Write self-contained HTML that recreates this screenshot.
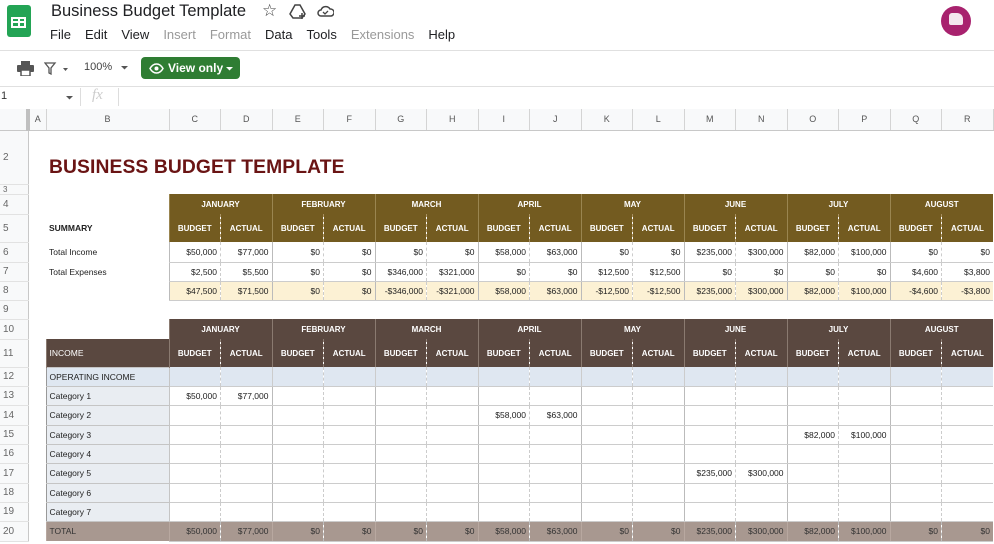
<!DOCTYPE html>
<html><head><meta charset="utf-8"><style>
*{box-sizing:border-box;margin:0;padding:0}
body{width:994px;height:544px;overflow:hidden;background:#fff;font-family:"Liberation Sans",Arial,sans-serif;position:relative}
.abs{position:absolute}
.menu span{margin-right:14px}
table{position:absolute;left:0;top:109px;border-collapse:collapse;table-layout:fixed;width:993px}
td{font-size:8.5px;color:#222;white-space:nowrap;overflow:hidden;padding:0 3px;border:none}
td.rh{background:#f8f9fa;color:#666;font-size:10px;text-align:left;padding-left:3px;border-right:1px solid #c8c8c8;border-bottom:1px solid #e2e2e2}
tr.ch td{background:#f8f9fa;color:#555;font-size:9px;text-align:center;border-right:1px solid #d4d4d4;border-bottom:1px solid #c8c8c8}
.h1 td.m{background:#735b20;color:#fff;font-weight:bold;text-align:center;border-left:1px solid #9a8550;font-size:8px}
.h1 td.m.d{border-left:1px dashed #a89060}
.h2 td.m{background:#5a4840;color:#fff;font-weight:bold;text-align:center;border-left:1px solid #8a7a70;font-size:8px}
.h2 td.m.d{border-left:1px dashed #8a7a70}
td.n{text-align:right;border-left:1px solid #bbb;border-bottom:1px solid #ccc}
td.n.d{border-left:1px dashed #ccc}
tr.net td.n{background:#fcf1d4}
td.lb{background:#e9edf2;border:1px solid #c5c5c5;border-left:1px solid #999}
tr.op td.c{background:#dfe7f1}
td.c{border-left:1px solid #ccc;border-bottom:1px solid #ccc}
td.c.d{border-left:1px dashed #ccc}
tr.tot td.t{background:#a89890;color:#333;border-left:1px solid #b8a8a0}
tr.tot td.t.d{border-left:1px dashed #bbb}
</style></head><body>
<div class="abs" style="left:7px;top:5px;width:24px;height:32px;background:#23a455;border-radius:3px"></div>
<div class="abs" style="left:11px;top:17px;width:15px;height:11px;border:2px solid #fff;background:#23a455"></div>
<div class="abs" style="left:11px;top:21px;width:15px;height:2px;background:#fff"></div>
<div class="abs" style="left:17.5px;top:17px;width:2px;height:11px;background:#fff"></div>
<div class="abs" style="left:51px;top:2px;font-size:16.5px;color:#202124">Business Budget Template</div>
<div class="abs" style="left:262px;top:1px;font-size:17px;color:#444">☆</div>
<svg class="abs" style="left:289px;top:3px" width="18" height="17" viewBox="0 0 18 17"><path d="M6 2h5l5 9-3 4H4l-3-4z" fill="none" stroke="#444" stroke-width="1.5"/><path d="M13 10v6M10 13h6" stroke="#444" stroke-width="1.5"/></svg>
<svg class="abs" style="left:317px;top:5px" width="17" height="12" viewBox="0 0 17 12"><path d="M4 11a3 3 0 010-6 5 5 0 019-1 3.5 3.5 0 011 7z" fill="none" stroke="#444" stroke-width="1.5"/><path d="M6 7l2 2 3-3" fill="none" stroke="#444" stroke-width="1.3"/></svg>
<div class="abs menu" style="left:50px;top:27px;font-size:13px;color:#202124;white-space:nowrap"><span>File</span><span>Edit</span><span>View</span><span style="color:#999">Insert</span><span style="color:#999">Format</span><span>Data</span><span>Tools</span><span style="color:#999">Extensions</span><span>Help</span></div>
<div class="abs" style="left:941px;top:6px;width:30px;height:30px;border-radius:50%;background:#a8226e"></div>
<div class="abs" style="left:949px;top:13px;width:14px;height:12px;background:#f4e6ee;border-radius:3px 6px 2px 2px"></div>
<div class="abs" style="left:0;top:50px;width:994px;height:1px;background:#e0e0e0"></div>
<svg class="abs" style="left:17px;top:61px" width="17" height="15" viewBox="0 0 17 15"><rect x="4" y="0" width="9" height="4" fill="#555"/><rect x="0" y="4" width="17" height="7" rx="1" fill="#555"/><rect x="4" y="9" width="9" height="6" fill="#fff" stroke="#555" stroke-width="1.5"/></svg>
<svg class="abs" style="left:44px;top:62px" width="28" height="13" viewBox="0 0 28 13"><path d="M1 1h10L7 6v6L5 11V6z" fill="none" stroke="#555" stroke-width="1.3"/><path d="M19 6h5l-2.5 3z" fill="#555"/></svg>
<div class="abs" style="left:84px;top:61px;font-size:11px;color:#444">100%</div>
<svg class="abs" style="left:121px;top:66px" width="8" height="4"><path d="M0 0h7l-3.5 3.5z" fill="#555"/></svg>
<div class="abs" style="left:141px;top:57px;width:99px;height:22px;background:#2f7d33;border-radius:4px;color:#fff;font-size:12px;font-weight:bold;line-height:22px;padding-left:27px">View only</div>
<svg class="abs" style="left:149px;top:63px" width="15" height="11" viewBox="0 0 15 11"><path d="M1 5.5C3 2 5 1 7.5 1S12 2 14 5.5C12 9 10 10 7.5 10S3 9 1 5.5z" fill="none" stroke="#fff" stroke-width="1.5"/><circle cx="7.5" cy="5.5" r="2" fill="#fff"/></svg>
<svg class="abs" style="left:226px;top:67px" width="8" height="4"><path d="M0 0h7l-3.5 3.5z" fill="#fff"/></svg>
<div class="abs" style="left:0;top:86px;width:994px;height:1px;background:#e0e0e0"></div>
<div class="abs" style="left:1px;top:90px;font-size:11px;color:#333">1</div>
<svg class="abs" style="left:66px;top:96px" width="8" height="4"><path d="M0 0h7l-3.5 3.5z" fill="#555"/></svg>
<div class="abs" style="left:80px;top:88px;width:1px;height:18px;background:#ddd"></div>
<div class="abs" style="left:92px;top:87px;font-size:15px;font-style:italic;color:#ccc;font-family:'Liberation Serif',serif">fx</div>
<div class="abs" style="left:118px;top:88px;width:1px;height:18px;background:#ddd"></div>
<div class="abs" style="left:49px;top:157px;font-size:19.3px;font-weight:bold;color:#6a1414;letter-spacing:0.1px">BUSINESS BUDGET TEMPLATE</div>
<table>
<colgroup><col style="width:28px"><col style="width:18px"><col style="width:123px"><col span="16" style="width:51.5px"></colgroup>
<tr class="ch" style="height:21px"><td style="background:#f8f9fa;border-right:4px solid #c0c0c0"></td><td>A</td><td>B</td><td>C</td><td>D</td><td>E</td><td>F</td><td>G</td><td>H</td><td>I</td><td>J</td><td>K</td><td>L</td><td>M</td><td>N</td><td>O</td><td>P</td><td>Q</td><td>R</td></tr>
<tr style="height:54px"><td class="rh">2</td><td colspan="18"></td></tr>
<tr style="height:9px"><td class="rh" style="font-size:8px">3</td><td colspan="18"></td></tr>
<tr class="h1" style="height:20px"><td class="rh">4</td><td></td><td></td><td class="m" colspan="2">JANUARY</td><td class="m" colspan="2">FEBRUARY</td><td class="m" colspan="2">MARCH</td><td class="m" colspan="2">APRIL</td><td class="m" colspan="2">MAY</td><td class="m" colspan="2">JUNE</td><td class="m" colspan="2">JULY</td><td class="m" colspan="2">AUGUST</td></tr>
<tr class="h1" style="height:28px"><td class="rh">5</td><td></td><td style="font-weight:bold">SUMMARY</td><td class="m">BUDGET</td><td class="m d">ACTUAL</td><td class="m">BUDGET</td><td class="m d">ACTUAL</td><td class="m">BUDGET</td><td class="m d">ACTUAL</td><td class="m">BUDGET</td><td class="m d">ACTUAL</td><td class="m">BUDGET</td><td class="m d">ACTUAL</td><td class="m">BUDGET</td><td class="m d">ACTUAL</td><td class="m">BUDGET</td><td class="m d">ACTUAL</td><td class="m">BUDGET</td><td class="m d">ACTUAL</td></tr>
<tr style="height:20px"><td class="rh">6</td><td></td><td>Total Income</td><td class="n">$50,000</td><td class="n d">$77,000</td><td class="n">$0</td><td class="n d">$0</td><td class="n">$0</td><td class="n d">$0</td><td class="n">$58,000</td><td class="n d">$63,000</td><td class="n">$0</td><td class="n d">$0</td><td class="n">$235,000</td><td class="n d">$300,000</td><td class="n">$82,000</td><td class="n d">$100,000</td><td class="n">$0</td><td class="n d">$0</td></tr>
<tr style="height:19px"><td class="rh">7</td><td></td><td>Total Expenses</td><td class="n">$2,500</td><td class="n d">$5,500</td><td class="n">$0</td><td class="n d">$0</td><td class="n">$346,000</td><td class="n d">$321,000</td><td class="n">$0</td><td class="n d">$0</td><td class="n">$12,500</td><td class="n d">$12,500</td><td class="n">$0</td><td class="n d">$0</td><td class="n">$0</td><td class="n d">$0</td><td class="n">$4,600</td><td class="n d">$3,800</td></tr>
<tr class="net" style="height:19px"><td class="rh">8</td><td></td><td></td><td class="n">$47,500</td><td class="n d">$71,500</td><td class="n">$0</td><td class="n d">$0</td><td class="n">-$346,000</td><td class="n d">-$321,000</td><td class="n">$58,000</td><td class="n d">$63,000</td><td class="n">-$12,500</td><td class="n d">-$12,500</td><td class="n">$235,000</td><td class="n d">$300,000</td><td class="n">$82,000</td><td class="n d">$100,000</td><td class="n">-$4,600</td><td class="n d">-$3,800</td></tr>
<tr style="height:19px"><td class="rh">9</td><td colspan="18"></td></tr>
<tr class="h2" style="height:20px"><td class="rh">10</td><td></td><td></td><td class="m" colspan="2">JANUARY</td><td class="m" colspan="2">FEBRUARY</td><td class="m" colspan="2">MARCH</td><td class="m" colspan="2">APRIL</td><td class="m" colspan="2">MAY</td><td class="m" colspan="2">JUNE</td><td class="m" colspan="2">JULY</td><td class="m" colspan="2">AUGUST</td></tr>
<tr class="h2" style="height:28px"><td class="rh">11</td><td></td><td class="m" style="text-align:left;font-weight:normal;font-size:8.5px">INCOME</td><td class="m">BUDGET</td><td class="m d">ACTUAL</td><td class="m">BUDGET</td><td class="m d">ACTUAL</td><td class="m">BUDGET</td><td class="m d">ACTUAL</td><td class="m">BUDGET</td><td class="m d">ACTUAL</td><td class="m">BUDGET</td><td class="m d">ACTUAL</td><td class="m">BUDGET</td><td class="m d">ACTUAL</td><td class="m">BUDGET</td><td class="m d">ACTUAL</td><td class="m">BUDGET</td><td class="m d">ACTUAL</td></tr>
<tr class="op" style="height:19px"><td class="rh">12</td><td></td><td class="lb" style="background:#dfe7f1">OPERATING INCOME</td><td class="c"></td><td class="c d"></td><td class="c"></td><td class="c d"></td><td class="c"></td><td class="c d"></td><td class="c"></td><td class="c d"></td><td class="c"></td><td class="c d"></td><td class="c"></td><td class="c d"></td><td class="c"></td><td class="c d"></td><td class="c"></td><td class="c d"></td></tr>
<tr style="height:19px"><td class="rh">13</td><td></td><td class="lb">Category 1</td><td class="n">$50,000</td><td class="n d">$77,000</td><td class="n"></td><td class="n d"></td><td class="n"></td><td class="n d"></td><td class="n"></td><td class="n d"></td><td class="n"></td><td class="n d"></td><td class="n"></td><td class="n d"></td><td class="n"></td><td class="n d"></td><td class="n"></td><td class="n d"></td></tr>
<tr style="height:20px"><td class="rh">14</td><td></td><td class="lb">Category 2</td><td class="n"></td><td class="n d"></td><td class="n"></td><td class="n d"></td><td class="n"></td><td class="n d"></td><td class="n">$58,000</td><td class="n d">$63,000</td><td class="n"></td><td class="n d"></td><td class="n"></td><td class="n d"></td><td class="n"></td><td class="n d"></td><td class="n"></td><td class="n d"></td></tr>
<tr style="height:19px"><td class="rh">15</td><td></td><td class="lb">Category 3</td><td class="n"></td><td class="n d"></td><td class="n"></td><td class="n d"></td><td class="n"></td><td class="n d"></td><td class="n"></td><td class="n d"></td><td class="n"></td><td class="n d"></td><td class="n"></td><td class="n d"></td><td class="n">$82,000</td><td class="n d">$100,000</td><td class="n"></td><td class="n d"></td></tr>
<tr style="height:19px"><td class="rh">16</td><td></td><td class="lb">Category 4</td><td class="n"></td><td class="n d"></td><td class="n"></td><td class="n d"></td><td class="n"></td><td class="n d"></td><td class="n"></td><td class="n d"></td><td class="n"></td><td class="n d"></td><td class="n"></td><td class="n d"></td><td class="n"></td><td class="n d"></td><td class="n"></td><td class="n d"></td></tr>
<tr style="height:20px"><td class="rh">17</td><td></td><td class="lb">Category 5</td><td class="n"></td><td class="n d"></td><td class="n"></td><td class="n d"></td><td class="n"></td><td class="n d"></td><td class="n"></td><td class="n d"></td><td class="n"></td><td class="n d"></td><td class="n">$235,000</td><td class="n d">$300,000</td><td class="n"></td><td class="n d"></td><td class="n"></td><td class="n d"></td></tr>
<tr style="height:19px"><td class="rh">18</td><td></td><td class="lb">Category 6</td><td class="n"></td><td class="n d"></td><td class="n"></td><td class="n d"></td><td class="n"></td><td class="n d"></td><td class="n"></td><td class="n d"></td><td class="n"></td><td class="n d"></td><td class="n"></td><td class="n d"></td><td class="n"></td><td class="n d"></td><td class="n"></td><td class="n d"></td></tr>
<tr style="height:19px"><td class="rh">19</td><td></td><td class="lb">Category 7</td><td class="n"></td><td class="n d"></td><td class="n"></td><td class="n d"></td><td class="n"></td><td class="n d"></td><td class="n"></td><td class="n d"></td><td class="n"></td><td class="n d"></td><td class="n"></td><td class="n d"></td><td class="n"></td><td class="n d"></td><td class="n"></td><td class="n d"></td></tr>
<tr class="tot" style="height:20px"><td class="rh">20</td><td></td><td class="t">TOTAL</td><td class="n t">$50,000</td><td class="n t d">$77,000</td><td class="n t">$0</td><td class="n t d">$0</td><td class="n t">$0</td><td class="n t d">$0</td><td class="n t">$58,000</td><td class="n t d">$63,000</td><td class="n t">$0</td><td class="n t d">$0</td><td class="n t">$235,000</td><td class="n t d">$300,000</td><td class="n t">$82,000</td><td class="n t d">$100,000</td><td class="n t">$0</td><td class="n t d">$0</td></tr>
</table>
</body></html>
